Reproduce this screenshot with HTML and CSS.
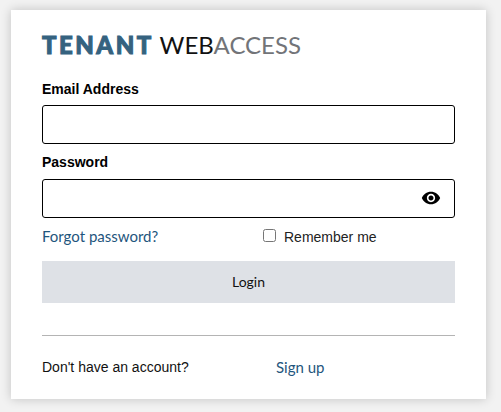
FILE: index.html
```html
<!DOCTYPE html>
<html lang="en">
<head>
    <meta charset="UTF-8">
    <title>Tenant WebAccess</title>
    <link rel="stylesheet" href="styles.css">
</head>
<body>
    <main class="card">
        <h1 class="logo"><span class="logo-tenant">TENANT</span> <span class="logo-web">WEB</span><span class="logo-access">ACCESS</span></h1>
        <form class="login-form">
            <label class="field-label" for="email">Email Address</label>
            <input type="text" id="email" class="input-field">

            <label class="field-label" for="password">Password</label>
            <div class="password-wrap">
                <input type="password" id="password" class="input-field">
                <svg class="eye-icon" viewBox="0 0 24 24" width="20" height="20" aria-hidden="true">
                    <path d="M12 4.5C7 4.5 2.73 7.61 1 12c1.73 4.39 6 7.5 11 7.5s9.27-3.11 11-7.5c-1.73-4.39-6-7.5-11-7.5zM12 17c-2.76 0-5-2.24-5-5s2.24-5 5-5 5 2.24 5 5-2.24 5-5 5zm0-8c-1.66 0-3 1.34-3 3s1.34 3 3 3 3-1.34 3-3-1.34-3-3-3z"/>
                </svg>
            </div>

            <div class="options-row">
                <a class="link forgot" href="#">Forgot password?</a>
                <label class="remember" for="remember"><input type="checkbox" id="remember"><span>Remember me</span></label>
            </div>

            <button type="button" class="btn-login">Login</button>
        </form>
        <hr class="divider">
        <div class="signup-row">
            <span class="signup-text">Don't have an account?</span>
            <a class="link" href="#">Sign up</a>
        </div>
    </main>
</body>
</html>
```

FILE: styles.css
```css
body {
    margin: 0;
    height: 412px;
    overflow: hidden;
    background-color: #f2f2f2;
    font-family: "Liberation Sans", Arial, sans-serif;
    color: #000;
}

.card {
    box-sizing: border-box;
    width: 475px;
    height: 389px;
    margin: 10px 0 0 11px;
    padding: 21px 31px 0;
    background-color: #fff;
    box-shadow: 0 0 10px rgba(0, 0, 0, 0.2);
}

.logo {
    margin: 0 0 22px;
    font-family: Lato, sans-serif;
    font-size: 24px;
    font-weight: 400;
    line-height: 28px;
    white-space: nowrap;
}

.logo-tenant {
    color: #35627f;
    font-weight: 900;
    letter-spacing: 2.5px;
    -webkit-text-stroke: 1px #35627f;
}

.logo-web {
    color: #111;
}

.logo-access {
    color: #727478;
}

.login-form {
    display: flex;
    flex-direction: column;
}

.field-label {
    font-size: 14px;
    font-weight: bold;
    line-height: 16px;
    margin-bottom: 8px;
}

.input-field {
    box-sizing: border-box;
    width: 100%;
    height: 39px;
    margin: 0 0 10px;
    border: 1px solid #000;
    border-radius: 3px;
    outline: none;
    display: block;
}

.password-wrap {
    position: relative;
    margin-top: 1px;
}

.password-wrap .input-field {
    margin-bottom: 0;
}

.eye-icon {
    position: absolute;
    right: 14px;
    top: 9px;
}

.options-row {
    display: flex;
    align-items: center;
    height: 36px;
    margin-bottom: 7px;
}

.link {
    font-family: Lato, sans-serif;
    font-size: 15px;
    color: #1f567d;
    text-decoration: none;
}

.forgot {
    width: 221px;
}

.remember {
    display: flex;
    align-items: center;
    font-size: 14px;
    color: #222;
    margin-top: 1px;
}

.remember input {
    width: 13px;
    height: 13px;
    margin: 0 8px 2px 0;
}

.btn-login {
    width: 100%;
    height: 42px;
    padding-bottom: 3px;
    border: none;
    background-color: #dee1e6;
    color: #111;
    font-family: Lato, sans-serif;
    font-size: 14px;
}

.divider {
    margin: 32px 0 0;
    border: none;
    border-top: 1px solid #b4b4b4;
}

.signup-row {
    display: flex;
    align-items: center;
    height: 48px;
    margin-top: 7px;
}

.signup-text {
    width: 234px;
    font-size: 14px;
    color: #111;
}
```
